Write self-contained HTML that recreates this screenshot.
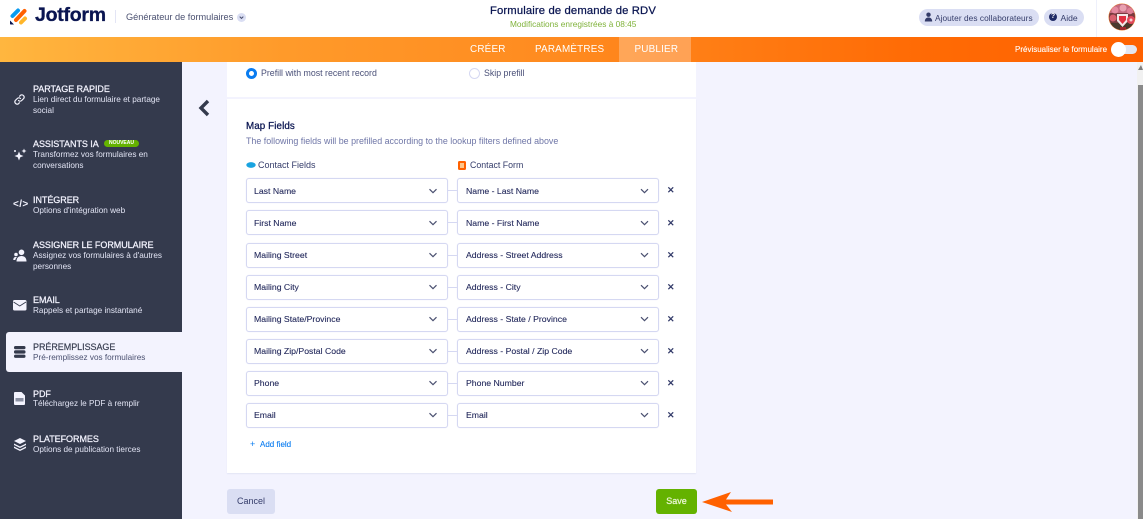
<!DOCTYPE html>
<html lang="fr"><head><meta charset="utf-8"><title>Jotform</title>
<style>
html,body{margin:0;padding:0}
body{width:1143px;height:519px;overflow:hidden;position:relative;background:#f3f3fe;font-family:"Liberation Sans",sans-serif;color:#0a1551}
.a{position:absolute;white-space:nowrap}
.top{left:0;top:0;width:1143px;height:37px;background:#fff}
.nav{left:0;top:37px;width:1143px;height:25px;background:linear-gradient(90deg,#ffb63f 0,#ff9a2a 25%,#ff8a1f 50%,#ff6b05 80%,#ff6100 100%)}
.tab{color:#fff;font-size:9.9px;top:43.500px;letter-spacing:.2px}
.side{left:0;top:62px;width:182px;height:457px;background:#343a4d}
.t{left:33px;margin-top:1px;color:#f3f3fe;font-size:9px;letter-spacing:-.05px;-webkit-text-stroke:.25px #f3f3fe}
.s{left:33px;color:#e3e5f5;font-size:8.2px;line-height:11px;white-space:normal;width:135px}
.sel{box-sizing:border-box;height:25px;width:202px;background:#fff;border:1px solid #d5d8f2;border-radius:3px;box-shadow:0 0 1px #e3e5f5}
.lb{font-size:8.7px;color:#23295c;margin-top:.5px;-webkit-text-stroke:.1px #23295c}
.x{font-size:9px;font-weight:bold;color:#343c6a;left:667px}
.ln{left:448px;width:9px;height:1px;background:#d5d8f2}
.pill{background:#dadef3;border-radius:9px;height:17px;top:9px}
</style></head><body>

<div class="a top"></div>
<svg class="a" style="left:9px;top:6px" width="19" height="20" viewBox="0 0 19 20">
<g fill="none" stroke-linecap="round" stroke-width="4"><path d="M3.500 10 9 4.500" stroke="#0a9bf0"/><path d="M7 14 15.500 5" stroke="#ff6100"/><path d="M12 16.500 16 12.500" stroke="#ffb629"/></g>
<path d="M1 14.500v3.200a.8.8 0 0 0 .8.8H5z" fill="#0a1551"/></svg>
<div class="a" style="left:35px;top:4px;font-size:19.500px;font-weight:bold;letter-spacing:-.25px;color:#0a1551;-webkit-text-stroke:.3px #0a1551">Jotform</div>
<div class="a" style="left:115px;top:10px;width:1px;height:13px;background:#e3e5f5"></div>
<div class="a" style="left:126px;top:11.500px;font-size:9.200px;color:#4a5070">Générateur de formulaires</div>
<div class="a" style="left:237px;top:13px;width:9px;height:9px;border-radius:50%;background:#dadef3"></div>
<svg class="a" style="left:237px;top:13px" width="9" height="9"><path d="M2.700 3.600 4.500 5.400 6.300 3.600" fill="none" stroke="#4a5070" stroke-width="1"/></svg>

<div class="a" style="left:490px;top:5px;font-size:11.300px;letter-spacing:.12px;color:#0a1551;-webkit-text-stroke:.25px #0a1551">Formulaire de demande de RDV</div>
<div class="a" style="left:510px;top:19px;font-size:8.300px;color:#7fb23a">Modifications enregistrées à 08:45</div>

<div class="a pill" style="left:919px;width:120px"></div>
<svg class="a" style="left:924px;top:12px" width="9" height="10"><circle cx="4.500" cy="2.700" r="2.200" fill="#343c6a"/><path d="M.8 9.500C.8 6.800 2.400 5.500 4.500 5.500S8.200 6.800 8.200 9.500z" fill="#343c6a"/></svg>
<div class="a" style="left:935px;top:12.500px;font-size:8.300px;color:#343c6a;letter-spacing:.05px">Ajouter des collaborateurs</div>
<div class="a pill" style="left:1044px;width:40px"></div>
<div class="a" style="left:1049px;top:13px;width:8px;height:8px;border-radius:50%;background:#1f2a66;color:#fff;font-size:7px;line-height:8px;text-align:center;font-weight:bold">?</div>
<div class="a" style="left:1060.500px;top:12.500px;font-size:8.600px;color:#343c6a">Aide</div>
<div class="a" style="left:1096px;top:0;width:1px;height:37px;background:#eef0fb"></div>
<svg class="a" style="left:1108px;top:3px" width="28" height="28" viewBox="0 0 28 28">
<defs><clipPath id="c"><circle cx="14" cy="14" r="13"/></clipPath></defs>
<circle cx="14" cy="14" r="13.500" fill="#f08030"/>
<g clip-path="url(#c)"><rect width="28" height="28" fill="#7a3b3f"/><rect width="28" height="10" fill="#c46a80"/><circle cx="7" cy="7" r="3.500" fill="#e58aa0"/><circle cx="15" cy="5" r="3.500" fill="#e8a0b0"/><circle cx="22" cy="8" r="3.200" fill="#df7f95"/><rect y="20" width="28" height="8" fill="#4a3a2c"/><circle cx="5" cy="15" r="3.500" fill="#d9606f"/><path d="M9 11h11v7l-5.500 6-5.500-6z" fill="#f4e8e8"/><path d="M11 13h7v4l-3.500 4-3.500-4z" fill="#e03040"/><circle cx="23" cy="17" r="4" fill="#e2485a"/><circle cx="23" cy="17" r="1.500" fill="#f6d0d0"/><rect x="12" y="24" width="6" height="4" fill="#a02830"/></g></svg>

<div class="a nav"></div>
<div class="a" style="left:619px;top:37px;width:72px;height:25px;background:rgba(255,255,255,.27)"></div>
<div class="a tab" style="left:470px">CRÉER</div>
<div class="a tab" style="left:535px">PARAMÈTRES</div>
<div class="a tab" style="left:634.500px">PUBLIER</div>
<div class="a" style="left:1015px;top:45px;font-size:8px;color:#fff;-webkit-text-stroke:.1px #fff">Prévisualiser le formulaire</div>
<div class="a" style="left:1113px;top:45px;width:24px;height:9px;border-radius:5px;background:#e3e5f0"></div>
<div class="a" style="left:1111px;top:42px;width:15px;height:15px;border-radius:50%;background:#fff"></div>

<div class="a" style="left:1137px;top:62px;width:6px;height:457px;background:#f1f1f1"></div>
<div class="a" style="left:1138px;top:65px;width:0;height:0;border-left:3px solid transparent;border-right:2.500px solid transparent;border-bottom:5px solid #7f7f7f"></div>
<div class="a" style="left:1138px;top:85px;width:5px;height:434px;background:#8a8a8a"></div>

<div class="a side"></div>
<div class="a" style="left:6px;top:332px;width:176px;height:40px;background:#f3f3fe;border-radius:3px 0 0 3px"></div>

<svg class="a" style="left:13px;top:93px" width="13" height="13" viewBox="0 0 13 13" fill="none" stroke="#f3f3fe" stroke-width="1.200" stroke-linecap="round"><path d="M5.500 7.500a2.200 2.200 0 0 0 3.200 0l2-2a2.300 2.300 0 0 0-3.200-3.200L6.600 3.200"/><path d="M7.500 5.500a2.200 2.200 0 0 0-3.200 0l-2 2a2.300 2.300 0 0 0 3.200 3.200l.9-.9"/></svg>
<div class="a t" style="top:83px">PARTAGE RAPIDE</div>
<div class="a s" style="top:94px">Lien direct du formulaire et partage social</div>

<svg class="a" style="left:13px;top:148px" width="14" height="13" viewBox="0 0 14 13" fill="#f3f3fe"><path d="M6 3.500 7.300 6.700 10.500 8 7.300 9.300 6 12.500 4.700 9.300 1.500 8 4.700 6.700z"/><path d="M11 .5l.7 1.800 1.800.7-1.800.7-.7 1.800-.7-1.800L8.500 3l1.800-.7z"/><circle cx="2" cy="3" r="1"/></svg>
<div class="a t" style="top:138px">ASSISTANTS IA</div>
<div class="a" style="left:104px;top:140px;width:35px;height:7px;background:#64b200;border-radius:4px;color:#fff;font-size:5px;line-height:7px;text-align:center;font-weight:bold">NOUVEAU</div>
<div class="a s" style="top:149px">Transformez vos formulaires en conversations</div>

<div class="a" style="left:13px;top:199px;font-size:10px;color:#f3f3fe;font-weight:bold;letter-spacing:.4px">&lt;/&gt;</div>
<div class="a t" style="top:194px">INTÉGRER</div>
<div class="a s" style="top:205px">Options d'intégration web</div>

<svg class="a" style="left:13px;top:249px" width="14" height="13" viewBox="0 0 14 13" fill="#f3f3fe"><circle cx="8.500" cy="3.300" r="2.800"/><path d="M3.500 12.500C3.500 8.800 5.500 7 8.500 7s5 1.800 5 5.500z"/><circle cx="3" cy="5.500" r="1.800"/><path d="M.3 11C.3 8.800 1.300 8 3 8l1 .3C3 9 2.500 10 2.300 11z"/></svg>
<div class="a t" style="top:239px">ASSIGNER LE FORMULAIRE</div>
<div class="a s" style="top:250px">Assignez vos formulaires à d'autres personnes</div>

<svg class="a" style="left:13px;top:300px" width="14" height="11" viewBox="0 0 14 11"><rect width="13.500" height="10.500" rx="1.500" fill="#f3f3fe"/><path d="M.5 2 6.750 6 13 2" fill="none" stroke="#343a4d" stroke-width=".9"/></svg>
<div class="a t" style="top:294px">EMAIL</div>
<div class="a s" style="top:305px">Rappels et partage instantané</div>

<svg class="a" style="left:14px;top:346px" width="12" height="12" viewBox="0 0 12 12" fill="#343a4d"><rect width="11.500" height="3.300" rx="1.500"/><rect y="4.300" width="11.500" height="3.300" rx="1.500"/><rect y="8.600" width="11.500" height="3.300" rx="1.500"/></svg>
<div class="a t" style="top:341px;color:#343a4d;-webkit-text-stroke:.15px #343a4d">PRÉREMPLISSAGE</div>
<div class="a s" style="top:352px;color:#4a5070">Pré-remplissez vos formulaires</div>

<svg class="a" style="left:14px;top:392px" width="11" height="13" viewBox="0 0 11 13"><path d="M1 0h6.500L11 3.500V12a1 1 0 0 1-1 1H1a1 1 0 0 1-1-1V1a1 1 0 0 1 1-1z" fill="#f3f3fe"/><rect x="1.500" y="6" width="8" height="3.500" fill="#8b90a3"/></svg>
<div class="a t" style="top:387.500px">PDF</div>
<div class="a s" style="top:398px">Téléchargez le PDF à remplir</div>

<svg class="a" style="left:14px;top:438px" width="12" height="13" viewBox="0 0 12 13" fill="#f3f3fe"><path d="M6 0 12 3 6 6 0 3z"/><path d="M0 5.500 6 8.500 12 5.500V7L6 10 0 7z"/><path d="M0 8.500 6 11.500 12 8.500V10L6 13 0 10z"/></svg>
<div class="a t" style="top:433px">PLATEFORMES</div>
<div class="a s" style="top:444px">Options de publication tierces</div>

<svg class="a" style="left:197px;top:99px" width="14" height="18" viewBox="0 0 14 18"><path d="M11 2 4 9 11 16" fill="none" stroke="#343a4d" stroke-width="3.400"/></svg>

<div class="a" style="left:227px;top:62px;width:469px;height:35px;background:#fff"></div>
<div class="a" style="left:227px;top:99px;width:469px;height:374px;background:#fff;box-shadow:0 1px 1px #e3e5f5"></div>

<div class="a" style="left:245.500px;top:67.500px;width:5px;height:5px;border:3px solid #0a7cf0;border-radius:50%;background:#fff"></div>
<div class="a" style="left:261px;top:67.500px;font-size:8.800px;color:#4a5078">Prefill with most recent record</div>
<div class="a" style="left:469px;top:68px;width:9px;height:9px;border:1px solid #d5d8f2;border-radius:50%;background:#fff"></div>
<div class="a" style="left:484px;top:67.500px;font-size:8.800px;color:#4a5078">Skip prefill</div>

<div class="a" style="left:246px;top:121px;font-size:9.800px;color:#0a1551;-webkit-text-stroke:.25px #0a1551;letter-spacing:.1px">Map Fields</div>
<div class="a" style="left:246px;top:136px;font-size:8.900px;color:#6f76a7">The following fields will be prefilled according to the lookup filters defined above</div>

<svg class="a" style="left:246px;top:161px" width="10" height="8"><ellipse cx="5" cy="4" rx="4.700" ry="2.900" fill="#19a3e0"/></svg>
<div class="a" style="left:258px;top:160px;font-size:9px;color:#343c6a">Contact Fields</div>
<div class="a" style="left:458px;top:161px;width:8px;height:9px;background:#ff6100;border-radius:1.500px"></div>
<div class="a" style="left:460px;top:163px;width:4px;height:5px;background:#ffc68a"></div>
<div class="a" style="left:470px;top:160px;font-size:8.800px;color:#343c6a">Contact Form</div>

<!-- rows -->
<div class="a sel" style="left:246px;top:178px"></div><div class="a ln" style="top:190px"></div><div class="a sel" style="left:457px;top:178px"></div>
<div class="a lb" style="left:254px;top:185px">Last Name</div><div class="a lb" style="left:466px;top:185px">Name - Last Name</div><div class="a x" style="top:185px">✕</div>
<div class="a sel" style="left:246px;top:210px"></div><div class="a ln" style="top:222px"></div><div class="a sel" style="left:457px;top:210px"></div>
<div class="a lb" style="left:254px;top:217px">First Name</div><div class="a lb" style="left:466px;top:217px">Name - First Name</div><div class="a x" style="top:218px">✕</div>
<div class="a sel" style="left:246px;top:243px"></div><div class="a ln" style="top:255px"></div><div class="a sel" style="left:457px;top:243px"></div>
<div class="a lb" style="left:254px;top:249.500px">Mailing Street</div><div class="a lb" style="left:466px;top:249.500px">Address - Street Address</div><div class="a x" style="top:250px">✕</div>
<div class="a sel" style="left:246px;top:275px"></div><div class="a ln" style="top:287px"></div><div class="a sel" style="left:457px;top:275px"></div>
<div class="a lb" style="left:254px;top:281.500px">Mailing City</div><div class="a lb" style="left:466px;top:281.500px">Address - City</div><div class="a x" style="top:282px">✕</div>
<div class="a sel" style="left:246px;top:307px"></div><div class="a ln" style="top:319px"></div><div class="a sel" style="left:457px;top:307px"></div>
<div class="a lb" style="left:254px;top:313px">Mailing State/Province</div><div class="a lb" style="left:466px;top:313px">Address - State / Province</div><div class="a x" style="top:314px">✕</div>
<div class="a sel" style="left:246px;top:339px"></div><div class="a ln" style="top:351px"></div><div class="a sel" style="left:457px;top:339px"></div>
<div class="a lb" style="left:254px;top:345px">Mailing Zip/Postal Code</div><div class="a lb" style="left:466px;top:345px">Address - Postal / Zip Code</div><div class="a x" style="top:346px">✕</div>
<div class="a sel" style="left:246px;top:371px"></div><div class="a ln" style="top:383px"></div><div class="a sel" style="left:457px;top:371px"></div>
<div class="a lb" style="left:254px;top:377px">Phone</div><div class="a lb" style="left:466px;top:377px">Phone Number</div><div class="a x" style="top:378px">✕</div>
<div class="a sel" style="left:246px;top:403px"></div><div class="a ln" style="top:415px"></div><div class="a sel" style="left:457px;top:403px"></div>
<div class="a lb" style="left:254px;top:409px">Email</div><div class="a lb" style="left:466px;top:409px">Email</div><div class="a x" style="top:410px">✕</div>

<svg class="a" style="left:425px;top:178px" width="230" height="250" fill="none" stroke="#4a5070" stroke-width="1.200">
<path d="M4.500 11.200 8 14.700 11.500 11.200M216 11.200 219.500 14.700 223 11.200"/>
<path d="M4.500 43.200 8 46.700 11.500 43.200M216 43.200 219.500 46.700 223 43.200"/>
<path d="M4.500 75.200 8 78.700 11.500 75.200M216 75.200 219.500 78.700 223 75.200"/>
<path d="M4.500 107.200 8 110.700 11.500 107.200M216 107.200 219.500 110.700 223 107.200"/>
<path d="M4.500 139.200 8 142.700 11.500 139.200M216 139.200 219.500 142.700 223 139.200"/>
<path d="M4.500 171.200 8 174.700 11.500 171.200M216 171.200 219.500 174.700 223 171.200"/>
<path d="M4.500 203.200 8 206.700 11.500 203.200M216 203.200 219.500 206.700 223 203.200"/>
<path d="M4.500 235.200 8 238.700 11.500 235.200M216 235.200 219.500 238.700 223 235.200"/>
</svg>

<div class="a" style="left:250px;top:439px;font-size:9px;color:#0a7cf0">+</div>
<div class="a" style="left:260px;top:440px;font-size:8px;color:#0a7cf0;-webkit-text-stroke:.1px #0a7cf0">Add field</div>

<div class="a" style="left:227px;top:489px;width:48px;height:25px;background:#dadef3;border-radius:3px;color:#343c6a;font-size:9px;line-height:25px;text-align:center">Cancel</div>
<div class="a" style="left:656px;top:489px;width:41px;height:25px;background:#64b200;border-radius:3px;color:#e8f5d0;font-size:9px;line-height:25px;text-align:center;-webkit-text-stroke:.3px #e8f5d0">Save</div>
<svg class="a" style="left:702px;top:491px" width="72" height="22" viewBox="0 0 72 22"><path d="M0 11 29 1 24 8.500H71V13.500H24L30 21z" fill="#ff6100"/></svg>

</body></html>
